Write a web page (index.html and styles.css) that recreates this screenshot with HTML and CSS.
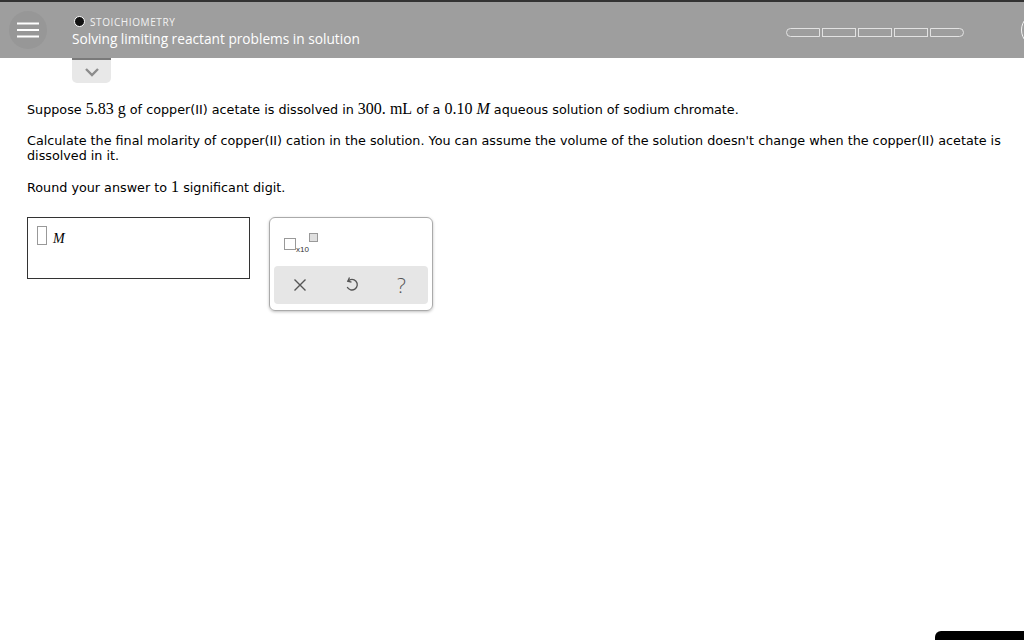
FILE: index.html
```html
<!DOCTYPE html>
<html lang="en">
<head>
<meta charset="UTF-8">
<title>Solving limiting reactant problems in solution</title>
<link rel="stylesheet" href="styles.css">
</head>
<body>

<!-- Top bar -->
<div class="topbar">
<div class="menu-btn">
<svg width="22" height="16" viewBox="0 0 22 16"><path d="M0 1.5H22M0 8H22M0 14.5H22" stroke="#fff" stroke-width="2"/></svg>
</div>
<div class="topic">
<div class="topic-name"><span class="dot"></span>STOICHIOMETRY</div>
<div class="topic-title">Solving limiting reactant problems in solution</div>
</div>
<div class="progress">
<span class="seg first"></span><span class="seg"></span><span class="seg"></span><span class="seg"></span><span class="seg last"></span>
</div>
<div class="round-btn"></div>
</div>

<div class="tab">
<svg width="16" height="10" viewBox="0 0 16 10"><path d="M2 2L8 8L14 2" fill="none" stroke="#8c8c8c" stroke-width="2.4"/></svg>
</div>

<!-- Question -->
<div class="question">
<p>Suppose <span class="m">5.83</span> <span class="m">g</span> of copper(II) acetate is dissolved in <span class="m">300.</span> <span class="m">mL</span> of a <span class="m">0.10</span> <span class="m i">M</span> aqueous solution of sodium chromate.</p>
<p>Calculate the final molarity of copper(II) cation in the solution. You can assume the volume of the solution doesn't change when the copper(II) acetate is dissolved in it.</p>
<p>Round your answer to <span class="m">1</span> significant digit.</p>

<div class="answer-row">
<div class="answer-box">
<span class="slot"></span><span class="m i unit">M</span>
</div>
<div class="tools">
<div class="templ"><span class="tbox"></span><span class="x10">x10</span><span class="tsup"></span></div>
<div class="actions">
<svg width="14" height="14" viewBox="0 0 14 14"><path d="M1.5 1.5L12.5 12.5M12.5 1.5L1.5 12.5" stroke="#555" stroke-width="1.4"/></svg>
<svg width="14" height="18" viewBox="0 0 14 18"><path d="M4.5 1.5L2.8 5.2L6.5 6.2" fill="none" stroke="#555" stroke-width="1.3"/><path d="M3 5.2A5.3 5.3 0 1 1 2.2 11" fill="none" stroke="#555" stroke-width="1.3"/></svg>
<span class="help">?</span>
</div>
</div>
</div>
</div>

<div class="corner"></div>

</body>
</html>
```

FILE: styles.css
```css
body{
    margin:0;
    background:#fff;
    font-family:"DejaVu Sans", Verdana, sans-serif;
    color:#000;
    width:1024px;
    height:640px;
    overflow:hidden;
    position:relative;
}

.topbar{
    height:56px;
    background:#9e9e9e;
    border-top:2px solid #333;
    display:flex;
    align-items:center;
    overflow:hidden;
}

.menu-btn{
    width:38px;
    height:38px;
    border-radius:50%;
    background:#979797;
    margin-left:9px;
    display:flex;
    justify-content:center;
    align-items:center;
}

.topic{
    margin-left:25px;
    font-family:"Open Sans", Lato, sans-serif;
    color:#fff;
    padding-top:2px;
}

.topic-name{
    display:flex;
    align-items:center;
    font-size:10px;
    letter-spacing:0.6px;
    color:#f2f2f2;
    margin-left:2px;
}

.dot{
    width:9px;
    height:9px;
    border-radius:50%;
    background:#111;
    border:1px solid #fff;
    margin-right:5px;
}

.topic-title{
    font-size:13.7px;
    margin-top:0;
}

.progress{
    display:flex;
    margin-left:auto;
    margin-top:4px;
}

.seg{
    width:32px;
    height:7px;
    border:1px solid #e2e2e2;
    margin-right:2px;
}

.seg.first{
    border-radius:5px 0 0 5px;
}

.seg.last{
    border-radius:0 5px 5px 0;
    margin-right:0;
}

.round-btn{
    width:32px;
    height:32px;
    border-radius:50%;
    border:1.5px solid #f2f2f2;
    margin-left:57px;
    margin-right:-31px;
    flex-shrink:0;
}

.tab{
    width:39px;
    height:23px;
    margin-left:72px;
    background:#e8e8e8;
    border-top:2px solid #7a7a7a;
    border-radius:0 0 5px 5px;
    display:flex;
    justify-content:center;
    align-items:center;
}

.question{
    padding:0 20px 0 27px;
    font-size:12.75px;
    line-height:15px;
}

.question p{
    margin:0 0 16px;
}

.question p:first-child{
    margin-top:18px;
}

.m{
    font-family:"Liberation Serif", "Times New Roman", serif;
    font-size:16px;
    line-height:15px;
}

.i{
    font-style:italic;
}

.answer-row{
    display:flex;
    align-items:flex-start;
    margin-top:22px;
}

.answer-box{
    width:221px;
    height:60px;
    border:1px solid #333;
    display:flex;
    align-items:flex-start;
}

.slot{
    width:8px;
    height:17px;
    border:1px solid #999;
    margin:8px 0 0 9px;
}

.unit{
    margin:13px 0 0 6px;
    font-size:14px;
}

.tools{
    width:154px;
    height:92px;
    margin-left:19px;
    border:1px solid #aaa;
    border-radius:6px;
    box-shadow:0 1px 3px rgba(0,0,0,0.25);
    padding:0 4px;
}

.templ{
    display:flex;
    align-items:flex-start;
    margin:14px 0 0 10px;
    height:34px;
}

.tbox{
    width:10px;
    height:10px;
    border:1.5px solid #999;
    margin-top:6px;
}

.x10{
    font-family:Arial, "Liberation Sans", sans-serif;
    font-size:8px;
    margin-top:10px;
    color:#333;
}

.tsup{
    width:7px;
    height:7px;
    border:1px solid #999;
    background:#e0e0e0;
    margin-top:1px;
}

.actions{
    height:38px;
    background:#e6e6e6;
    border-radius:4px;
    display:flex;
    align-items:center;
    gap:38px;
    padding-left:19px;
}

.help{
    font-family:"Open Sans", sans-serif;
    font-size:21px;
    color:#555;
    font-weight:300;
}

.corner{
    position:absolute;
    right:0;
    bottom:0;
    width:89px;
    height:9px;
    background:#000;
    border-radius:6px 0 0 0;
}
```
